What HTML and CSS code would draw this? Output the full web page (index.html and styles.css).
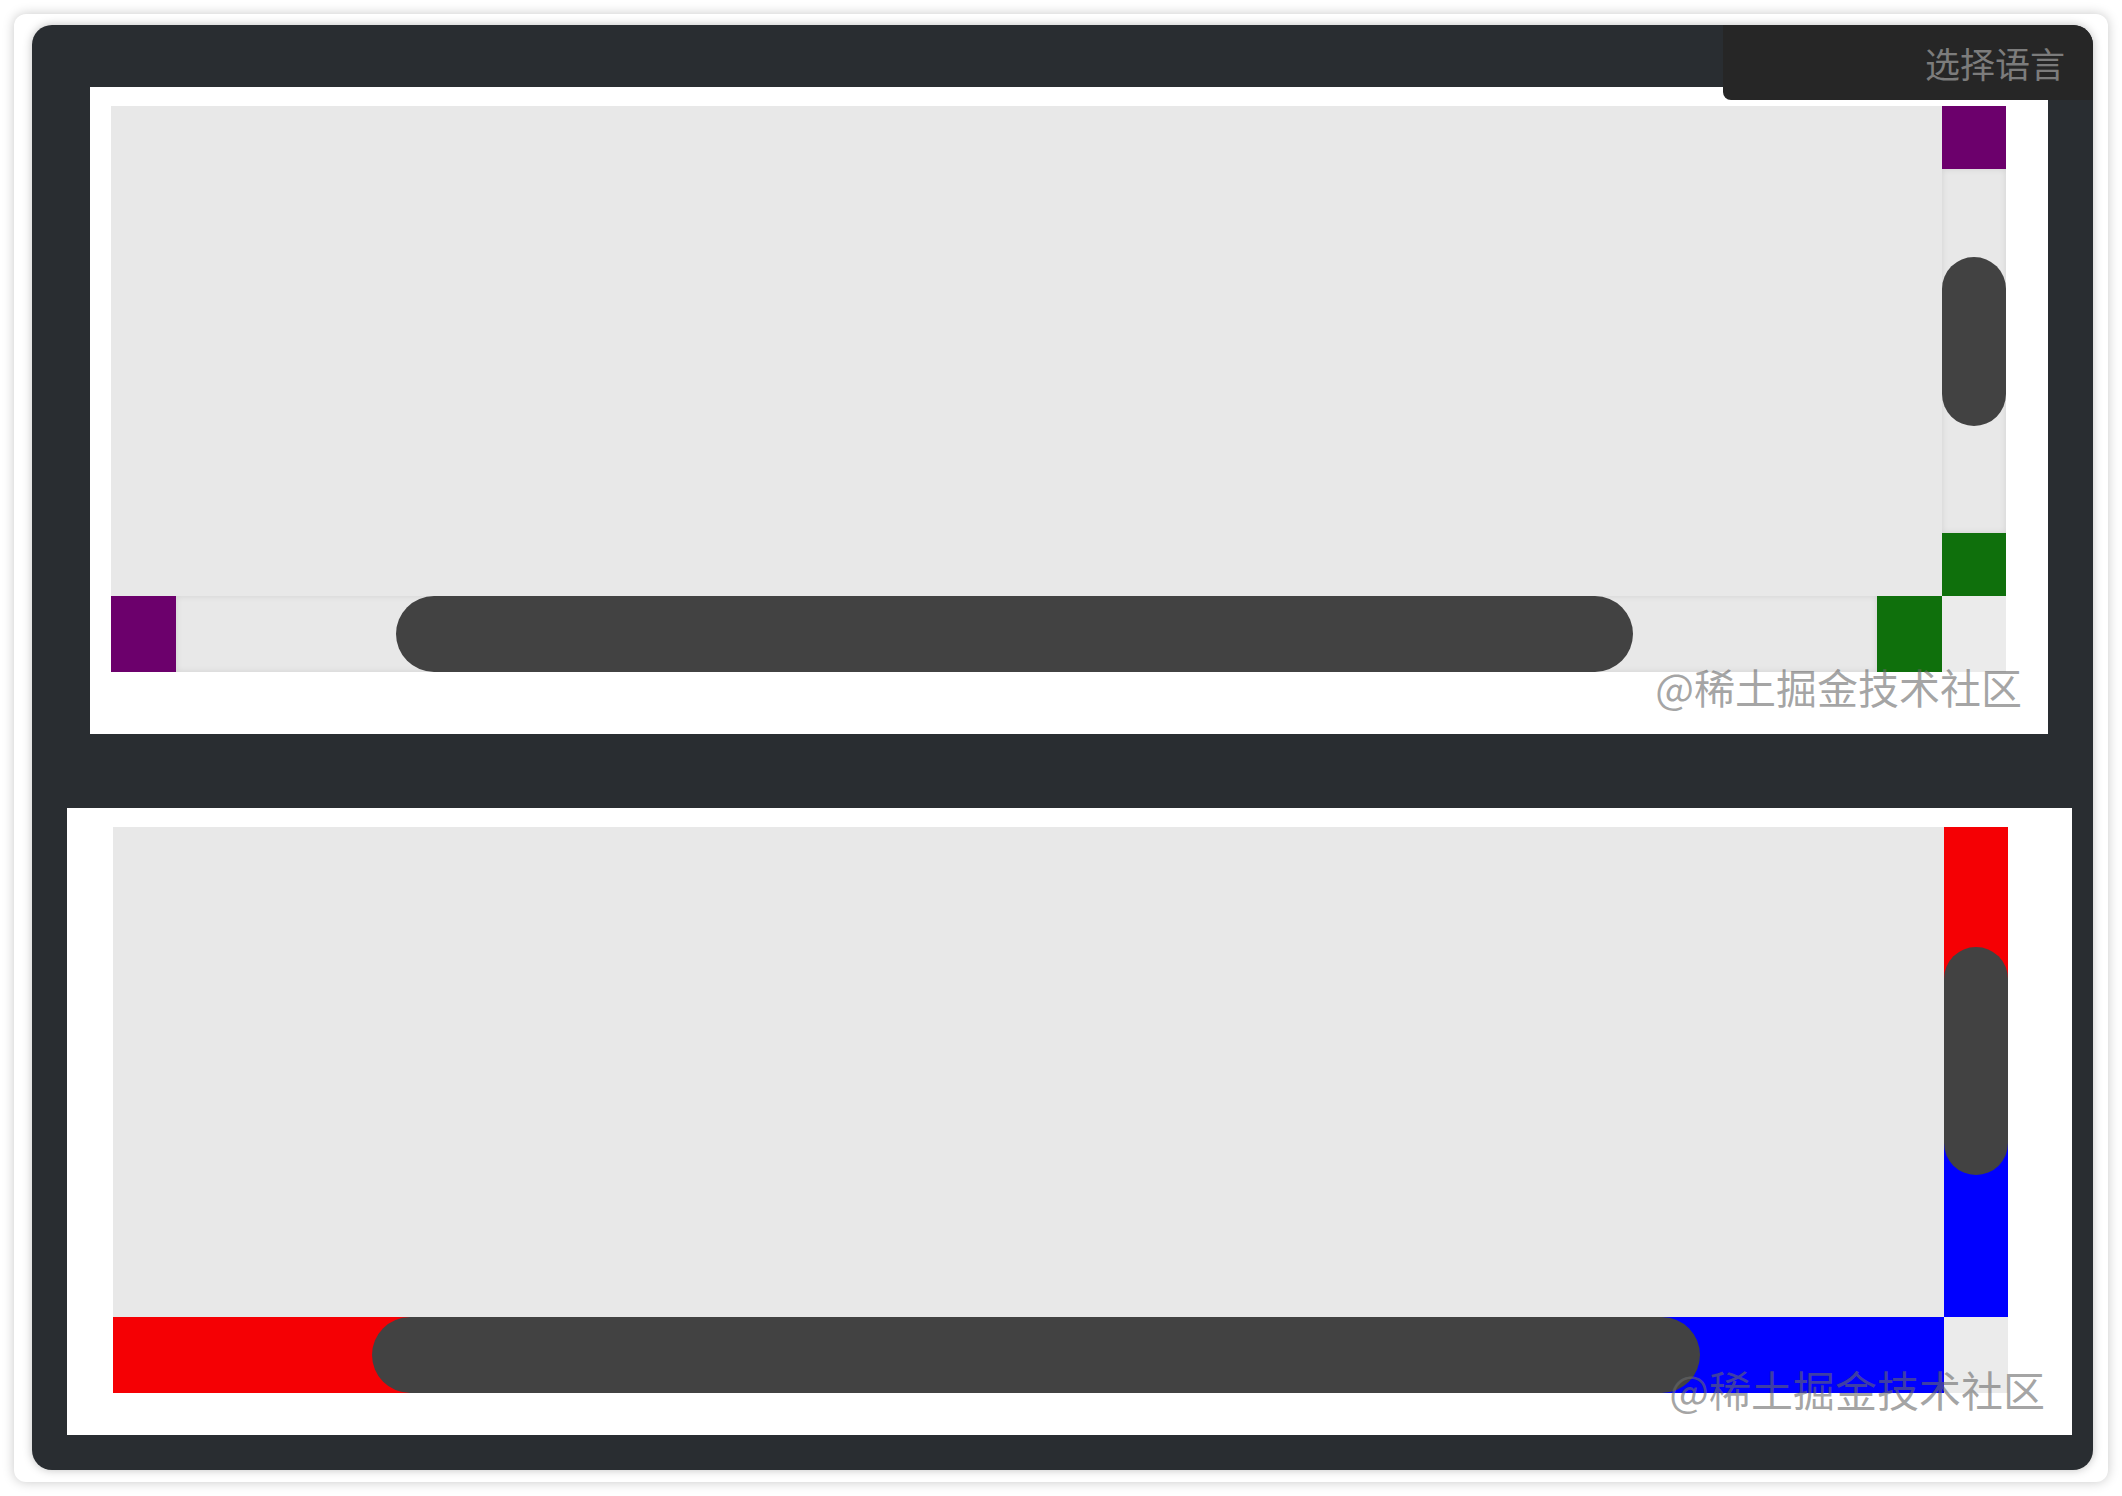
FILE: index.html
```html
<!DOCTYPE html>
<html lang="zh-CN">
<head>
    <meta charset="UTF-8">
    <meta name="viewport" content="width=device-width, initial-scale=1.0">
    <title>自定义滚动条</title>
    <link rel="stylesheet" href="styles.css">
</head>
<body>
    <div class="frame">
        <div class="panel">
            <div class="lang">选择语言</div>

            <!-- 示例一：按钮 + 轨道 -->
            <div class="demo demo-one">
                <div class="scroller">
                    <div class="view"></div>
                    <div class="vbar">
                        <span class="btn purple"></span>
                        <div class="track">
                            <span class="thumb thumb-v1"></span>
                        </div>
                        <span class="btn green"></span>
                    </div>
                    <div class="hbar">
                        <span class="btn purple"></span>
                        <div class="track">
                            <span class="thumb thumb-h1"></span>
                        </div>
                        <span class="btn green"></span>
                    </div>
                    <div class="corner"></div>
                </div>
                <span class="mark">@稀土掘金技术社区</span>
            </div>

            <!-- 示例二：track-piece 上色 -->
            <div class="demo demo-two">
                <div class="scroller">
                    <div class="view"></div>
                    <div class="vbar">
                        <div class="track piece-v">
                            <span class="thumb thumb-v2"></span>
                        </div>
                    </div>
                    <div class="hbar">
                        <div class="track piece-h">
                            <span class="thumb thumb-h2"></span>
                        </div>
                    </div>
                    <div class="corner"></div>
                </div>
                <span class="mark mark-two">@稀土掘金技术社区</span>
            </div>
        </div>
    </div>
</body>
</html>
```

FILE: styles.css
```css
body {
    margin: 0;
    background-color: #ffffff;
    font-family: "Noto Sans CJK SC", "Noto Sans", sans-serif;
}
.frame {
    margin: 14px;
    height: 1468px;
    box-sizing: border-box;
    padding: 11px 15px 12px 18px;
    background-color: #ffffff;
    border-radius: 12px;
    box-shadow: 0 0 12px rgba(0, 0, 0, 0.22);
}
.panel {
    position: relative;
    height: 100%;
    box-sizing: border-box;
    padding-top: 62px;
    background-color: #292d31;
    border-radius: 20px;
    box-shadow: 0 0 10px rgba(0, 0, 0, 0.25);
}
.lang {
    position: absolute;
    top: 0;
    right: 0;
    width: 370px;
    height: 75px;
    box-sizing: border-box;
    padding-right: 28px;
    background-color: #262626;
    border-radius: 0 20px 0 8px;
    color: #7c7c7c;
    font-size: 35px;
    line-height: 75px;
    text-align: right;
    z-index: 2;
}
.demo {
    position: relative;
    background-color: #ffffff;
}
.demo-one {
    margin: 0 45px 0 58px;
    padding: 19px 42px 62px 21px;
}
.demo-two {
    margin: 74px 21px 0 35px;
    padding: 19px 64px 42px 46px;
}
.scroller {
    display: grid;
    grid-template-columns: 1fr 64px;
    grid-template-rows: 490px 76px;
    height: 566px;
}
.view {
    background-color: #e8e8e8;
}
.vbar {
    display: flex;
    flex-direction: column;
}
.hbar {
    display: flex;
}
.corner {
    background-color: #ebebeb;
}
.btn {
    display: block;
    flex: none;
}
.vbar .btn {
    height: 63px;
}
.hbar .btn {
    width: 65px;
}
.purple {
    background-color: #6c006c;
}
.green {
    background-color: #0f700c;
}
.track {
    flex: 1;
    display: flex;
    background-color: #e8e8e8;
    box-shadow: inset 0 0 6px rgba(0, 0, 0, 0.1);
}
.vbar .track {
    flex-direction: column;
}
.thumb {
    display: block;
    flex: none;
    background-color: #424242;
    border-radius: 999px;
}
.vbar .thumb {
    width: 100%;
}
.hbar .thumb {
    height: 100%;
}
.thumb-v1 {
    margin-top: 88px;
    height: 169px;
}
.thumb-h1 {
    margin-left: 220px;
    width: 1237px;
}
.piece-v {
    box-shadow: none;
    background: linear-gradient(to bottom, #f50004 0, #f50004 234px, #0000ff 234px, #0000ff 100%);
}
.piece-h {
    box-shadow: none;
    background: linear-gradient(to right, #f50004 0, #f50004 923px, #0000ff 923px, #0000ff 100%);
}
.thumb-v2 {
    margin-top: 120px;
    height: 228px;
}
.thumb-h2 {
    margin-left: 259px;
    width: 1328px;
}
.mark {
    position: absolute;
    right: 26px;
    bottom: 27px;
    color: rgba(105, 105, 105, 0.6);
    font-size: 41px;
    line-height: 1;
    white-space: nowrap;
}
.mark-two {
    right: 27px;
    bottom: 25px;
    font-size: 42px;
}
```
